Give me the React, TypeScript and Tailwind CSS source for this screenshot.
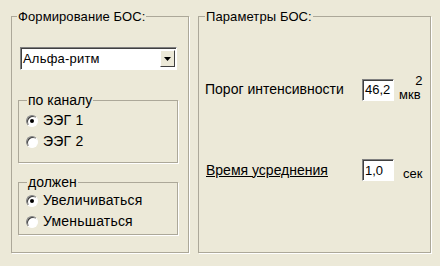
import React from "react"

function Radio({ checked, label }: { checked?: boolean; label: string }) {
  return (
    <div className="flex h-[21px] items-center gap-[5px]">
      <div className="relative flex h-[12px] w-[12px] items-center justify-center rounded-full border border-t-[#808080] border-l-[#808080] border-r-[#ffffff] border-b-[#ffffff] bg-white shadow-[inset_1px_1px_0_#404040]">
        {checked && <div className="h-[4px] w-[4px] rounded-full bg-black" />}
      </div>
      <span className="text-[14px] tracking-[0.2px]">{label}</span>
    </div>
  )
}

function Field({ value }: { value: string }) {
  return (
    <div className="flex h-[22px] w-[32px] items-center border border-t-[#808080] border-l-[#808080] border-r-white border-b-white bg-white pl-[2px] shadow-[inset_1px_1px_0_#404040]">
      {value}
    </div>
  )
}

export default function App() {
  return (
    <div
      className="flex h-[266px] w-[440px] gap-[9px] bg-[#ece9d8] pl-[11px] pt-[9px] text-[13px] leading-[15px] text-black"
      style={{ fontFamily: '"Liberation Sans", Arial, sans-serif' }}
    >
      {/* Формирование БОС */}
      <fieldset className="m-0 h-[244px] w-[178px] border border-[#aca899] p-0 shadow-[1px_1px_0_#fff]">
        <legend className="ml-[5px] px-[1px] tracking-[0.1px]">Формирование БОС:</legend>

        <div className="ml-[8px] mt-[23px] flex h-[23px] w-[157px] items-center border border-t-[#808080] border-l-[#808080] border-r-white border-b-white bg-white shadow-[inset_1px_1px_0_#404040]">
          <span className="flex-1 pl-[2px] tracking-[0.2px]">Альфа-ритм</span>
          <div className="mr-[1px] flex h-[17px] w-[15px] items-center justify-center border border-t-white border-l-white border-r-[#404040] border-b-[#404040] bg-[#ece9d8]">
            <svg width="7" height="4" viewBox="0 0 7 4">
              <path d="M0 0h7L3.5 4z" fill="#000" />
            </svg>
          </div>
        </div>

        <fieldset className="m-0 ml-[6px] mt-[23px] w-[160px] border border-[#aca899] px-[7px] pb-[10px] pt-[2px] shadow-[1px_1px_0_#fff]">
          <legend className="ml-[1px] px-[1px] text-[14px]">по каналу</legend>
          <Radio checked label="ЭЭГ 1" />
          <Radio label="ЭЭГ 2" />
        </fieldset>

        <fieldset className="m-0 ml-[6px] mt-[12px] w-[160px] border border-[#aca899] px-[7px] pb-[2px] pt-0 shadow-[1px_1px_0_#fff]">
          <legend className="ml-[1px] px-[1px] text-[14px]">должен</legend>
          <Radio checked label="Увеличиваться" />
          <Radio label="Уменьшаться" />
        </fieldset>
      </fieldset>

      {/* Параметры БОС */}
      <fieldset className="m-0 h-[244px] w-[233px] border border-[#aca899] p-0 shadow-[1px_1px_0_#fff]">
        <legend className="ml-[6px] px-[1px] tracking-[0.1px]">Параметры БОС:</legend>

        <div className="mt-[53px] flex items-center pl-[6px]">
          <span className="w-[157px] text-[14px]">Порог интенсивности</span>
          <Field value="46,2" />
          <span className="relative ml-[5px] mt-[10px]">
            мкв
            <span className="absolute -right-[2px] -top-[14px]">2</span>
          </span>
        </div>

        <div className="mt-[57px] flex items-center pl-[7px]">
          <span className="w-[156px] text-[14px] underline">Время усреднения</span>
          <Field value="1,0" />
          <span className="ml-[9px] mt-[6px]">сек</span>
        </div>
      </fieldset>
    </div>
  )
}
